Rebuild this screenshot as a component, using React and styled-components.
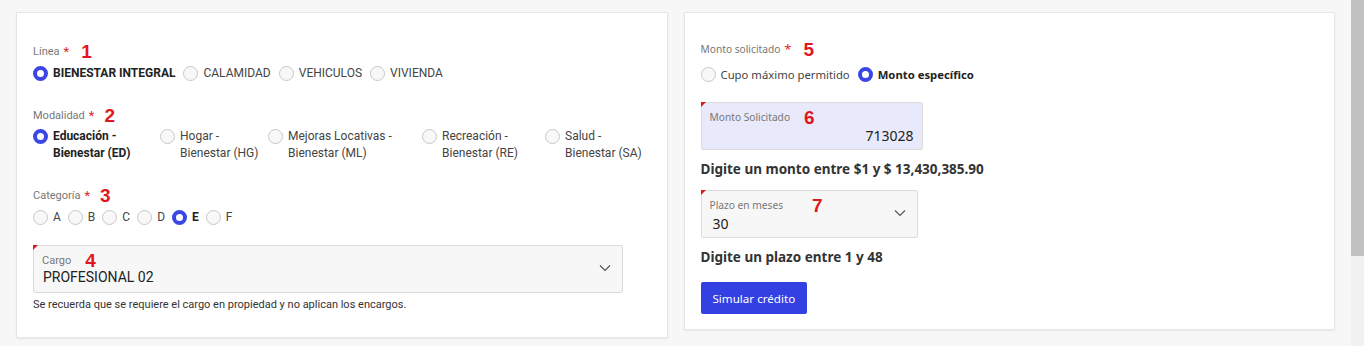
import React from "react";
import styled, { createGlobalStyle } from "styled-components";

const Global = createGlobalStyle`
  html, body { margin: 0; padding: 0; overflow: hidden; }
  body { background: #f7f7f7; }
`;

const Shell = styled.div`
  display: flex;
  height: 346px;
  overflow: hidden;
`;

const Page = styled.div`
  flex: 1;
  display: flex;
  align-items: flex-start;
  gap: 16px;
  padding: 12px 16px 0 16px;
`;

const ScrollTrack = styled.div`
  flex: none;
  width: 13px;
  background: #f1f1f1;
  display: flex;
  flex-direction: column;
`;

const ScrollThumb = styled.div`
  height: 256px;
  background: #c1c1c1;
`;

const Card = styled.div`
  flex: 1;
  background: #fff;
  border: 1px solid #e6e6e6;
  box-shadow: 0 1px 2px rgba(0, 0, 0, 0.06);
  box-sizing: border-box;
  height: ${(p) => p.h}px;
  padding: ${(p) => p.pad};
  font-family: ${(p) => p.font};
  color: #333;
`;

const Label = styled.div`
  display: flex;
  align-items: center;
  height: 18px;
  font-size: ${(p) => p.size || 11}px;
  color: #777;
`;

const Star = styled.span`
  color: #e3262b;
  margin-left: 4px;
  font-size: 13px;
`;

const Note = styled.span`
  color: #e0181e;
  font-family: "Liberation Sans", sans-serif;
  font-weight: 700;
  font-size: 19px;
  margin-left: ${(p) => p.ml || 12}px;
  line-height: 1;
`;

const Row = styled.div`
  display: flex;
  align-items: center;
  gap: ${(p) => p.gap || 8}px;
  margin-top: ${(p) => p.mt || 5}px;
`;

const Grid = styled.div`
  display: grid;
  grid-template-columns: 127px 108px 154px 123px auto;
  margin-top: 4px;
`;

const Option = styled.label`
  display: flex;
  align-items: flex-start;
  gap: 5px;
  font-size: ${(p) => p.size || 12}px;
  line-height: 17px;
  font-weight: ${(p) => (p.on ? 700 : 400)};
  color: ${(p) => (p.on ? "#222" : "#444")};
`;

const Dot = styled.span`
  flex: none;
  box-sizing: border-box;
  width: 15px;
  height: 15px;
  margin-top: 1px;
  border-radius: 50%;
  border: ${(p) => (p.on ? "4px solid #3a46e6" : "1px solid #c8c8c8")};
  background: ${(p) => (p.on ? "#fff" : "#f8f8f8")};
`;

const Section = styled.div`
  margin-top: ${(p) => p.mt}px;
`;

const Field = styled.div`
  position: relative;
  box-sizing: border-box;
  width: ${(p) => p.w}px;
  height: 48px;
  background: ${(p) => p.bg || "#f7f7f7"};
  border: 1px solid #dcdcdc;
  border-radius: 2px;
  padding: 6px 8px 0 8px;
  display: flex;
  flex-direction: column;
  &::before {
    content: "";
    position: absolute;
    left: -1px;
    top: -1px;
    border-top: 5px solid #e0181e;
    border-right: 5px solid transparent;
  }
`;

const FieldLabel = styled.div`
  display: flex;
  align-items: center;
  font-size: ${(p) => p.size || 11}px;
  color: #777;
  height: 16px;
`;

const FieldValue = styled.div`
  font-size: 14px;
  color: #222;
  margin-top: 1px;
  text-align: ${(p) => p.align || "left"};
  padding-left: ${(p) => p.pl || 1}px;
`;

const Chevron = styled.svg`
  position: absolute;
  right: 11px;
  top: 18px;
`;

const Help = styled.div`
  font-size: 11px;
  color: #333;
  margin-top: 5px;
`;

const Strong = styled.div`
  font-size: 13.5px;
  font-weight: 700;
  color: #333;
  margin-top: ${(p) => p.mt}px;
`;

const Button = styled.button`
  margin-top: 16px;
  height: 32px;
  padding: 0 12px;
  border: none;
  border-radius: 2px;
  background: #3341e3;
  color: #fff;
  font-family: inherit;
  font-size: 11.6px;
`;

const Down = () => (
  <Chevron width="12" height="8" viewBox="0 0 12 8">
    <path d="M1 1.5l5 5 5-5" fill="none" stroke="#555" strokeWidth="1.2" />
  </Chevron>
);

const leftFont = '"Roboto", "Liberation Sans", sans-serif';
const rightFont = '"Noto Sans", "Open Sans", sans-serif';

const lineas = ["BIENESTAR INTEGRAL", "CALAMIDAD", "VEHICULOS", "VIVIENDA"];
const modalidades = [
  ["Educación -", "Bienestar (ED)"],
  ["Hogar -", "Bienestar (HG)"],
  ["Mejoras Locativas -", "Bienestar (ML)"],
  ["Recreación -", "Bienestar (RE)"],
  ["Salud -", "Bienestar (SA)"],
];
const categorias = ["A", "B", "C", "D", "E", "F"];

export default function App() {
  return (
    <>
      <Global />
      <Shell>
        <Page>
          <Card h={326} pad="29px 16px 0 16px" font={leftFont}>
            <Label>
              Línea<Star>*</Star>
              <Note ml={12}>1</Note>
            </Label>
            <Row mt={5}>
              {lineas.map((l, i) => (
                <Option key={l} on={i === 0}>
                  <Dot on={i === 0} />
                  {l}
                </Option>
              ))}
            </Row>

            <Section mt={24}>
              <Label>
                Modalidad<Star>*</Star>
                <Note ml={10}>2</Note>
              </Label>
              <Grid>
                {modalidades.map((m, i) => (
                  <Option key={m[0]} on={i === 0}>
                    <Dot on={i === 0} />
                    <span>
                      {m[0]}
                      <br />
                      {m[1]}
                    </span>
                  </Option>
                ))}
              </Grid>
            </Section>

            <Section mt={24}>
              <Label>
                Categoría<Star>*</Star>
                <Note ml={10}>3</Note>
              </Label>
              <Row gap={7} mt={5}>
                {categorias.map((c, i) => (
                  <Option key={c} on={i === 4}>
                    <Dot on={i === 4} />
                    {c}
                  </Option>
                ))}
              </Row>
            </Section>

            <Section mt={19}>
              <Field w={590}>
                <FieldLabel>
                  Cargo<Note ml={14}>4</Note>
                </FieldLabel>
                <FieldValue>PROFESIONAL 02</FieldValue>
                <Down />
              </Field>
              <Help>Se recuerda que se requiere el cargo en propiedad y no aplican los encargos.</Help>
            </Section>
          </Card>

          <Card h={318} pad="27px 16px 0 16px" font={rightFont}>
            <Label size={10.2}>
              Monto solicitado<Star>*</Star>
              <Note ml={12}>5</Note>
            </Label>
            <Row gap={8} mt={8}>
              <Option size={11.3} on={false}>
                <Dot />
                Cupo máximo permitido
              </Option>
              <Option size={11.3} on>
                <Dot on />
                Monto específico
              </Option>
            </Row>

            <Section mt={19}>
              <Field w={222} bg="#e8eafc">
                <FieldLabel size={10.2}>
                  Monto Solicitado<Note ml={14}>6</Note>
                </FieldLabel>
                <FieldValue align="right">713028</FieldValue>
              </Field>
            </Section>
            <Strong mt={10}>Digite un monto entre $1 y $ 13,430,385.90</Strong>

            <Section mt={12}>
              <Field w={217}>
                <FieldLabel size={10.2}>
                  Plazo en meses<Note ml={29}>7</Note>
                </FieldLabel>
                <FieldValue pl={3}>30</FieldValue>
                <Down />
              </Field>
            </Section>
            <Strong mt={10}>Digite un plazo entre 1 y 48</Strong>
            <Button>Simular crédito</Button>
          </Card>
        </Page>
        <ScrollTrack>
          <ScrollThumb />
        </ScrollTrack>
      </Shell>
    </>
  );
}
